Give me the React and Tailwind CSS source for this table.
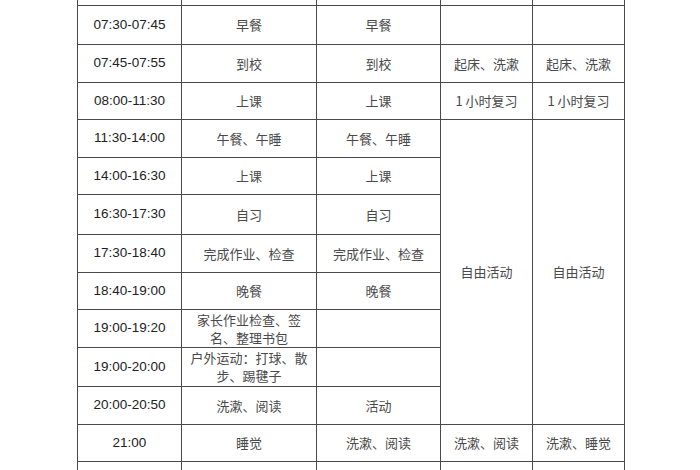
import React from "react";

const T = ({ children }) => (
  <td className="border border-[#4a4a4a] text-center align-middle p-0 text-[13.5px] text-[#222] font-['Liberation_Sans',Arial,sans-serif]">
    {children}
  </td>
);

const C = ({ children, rowSpan }) => (
  <td
    rowSpan={rowSpan}
    className="border border-[#4a4a4a] text-center align-middle p-0 text-[13px] leading-[18px] text-[#4a4a4a] font-['Noto_Sans_CJK_SC','Noto_Sans',sans-serif]"
  >
    {children}
  </td>
);

const rows = [
  { h: 39, t: "07:30-07:45", a: "早餐", b: "早餐", c: "", d: "" },
  { h: 38, t: "07:45-07:55", a: "到校", b: "到校", c: "起床、洗漱", d: "起床、洗漱" },
  { h: 37, t: "08:00-11:30", a: "上课", b: "上课", c: "1 小时复习", d: "1 小时复习" },
  { h: 38, t: "11:30-14:00", a: "午餐、午睡", b: "午餐、午睡", span: true },
  { h: 37, t: "14:00-16:30", a: "上课", b: "上课" },
  { h: 40, t: "16:30-17:30", a: "自习", b: "自习" },
  { h: 38, t: "17:30-18:40", a: "完成作业、检查", b: "完成作业、检查" },
  { h: 37, t: "18:40-19:00", a: "晚餐", b: "晚餐" },
  {
    h: 38,
    t: "19:00-19:20",
    a: (
      <>
        家长作业检查、签
        <br />
        名、整理书包
      </>
    ),
    b: "",
  },
  {
    h: 39,
    t: "19:00-20:00",
    a: (
      <>
        户外运动：打球、散
        <br />
        步、踢毽子
      </>
    ),
    b: "",
  },
  { h: 38, t: "20:00-20:50", a: "洗漱、阅读", b: "活动" },
  { h: 37, t: "21:00", a: "睡觉", b: "洗漱、阅读", c: "洗漱、阅读", d: "洗漱、睡觉", full: true },
];

export default function App() {
  return (
    <div className="w-[700px] h-[470px] bg-white overflow-hidden">
      <div className="pl-[77px] -mt-[33px]">
        <table className="border-collapse table-fixed w-[547px]">
          <colgroup>
            <col className="w-[104px]" />
            <col className="w-[135px]" />
            <col className="w-[124px]" />
            <col className="w-[92px]" />
            <col className="w-[92px]" />
          </colgroup>
          <tbody>
            <tr className="h-[38px]">
              <T></T>
              <C></C>
              <C></C>
              <C></C>
              <C></C>
            </tr>
            {rows.map((r, i) => (
              <tr key={i} style={{ height: r.h }}>
                <T>{r.t}</T>
                <C>{r.a}</C>
                <C>{r.b}</C>
                {i < 3 || r.full ? (
                  <>
                    <C>{r.c}</C>
                    <C>{r.d}</C>
                  </>
                ) : r.span ? (
                  <>
                    <C rowSpan={8}>自由活动</C>
                    <C rowSpan={8}>自由活动</C>
                  </>
                ) : null}
              </tr>
            ))}
            <tr className="h-[38px]">
              <T></T>
              <C></C>
              <C></C>
              <C></C>
              <C></C>
            </tr>
          </tbody>
        </table>
      </div>
    </div>
  );
}
